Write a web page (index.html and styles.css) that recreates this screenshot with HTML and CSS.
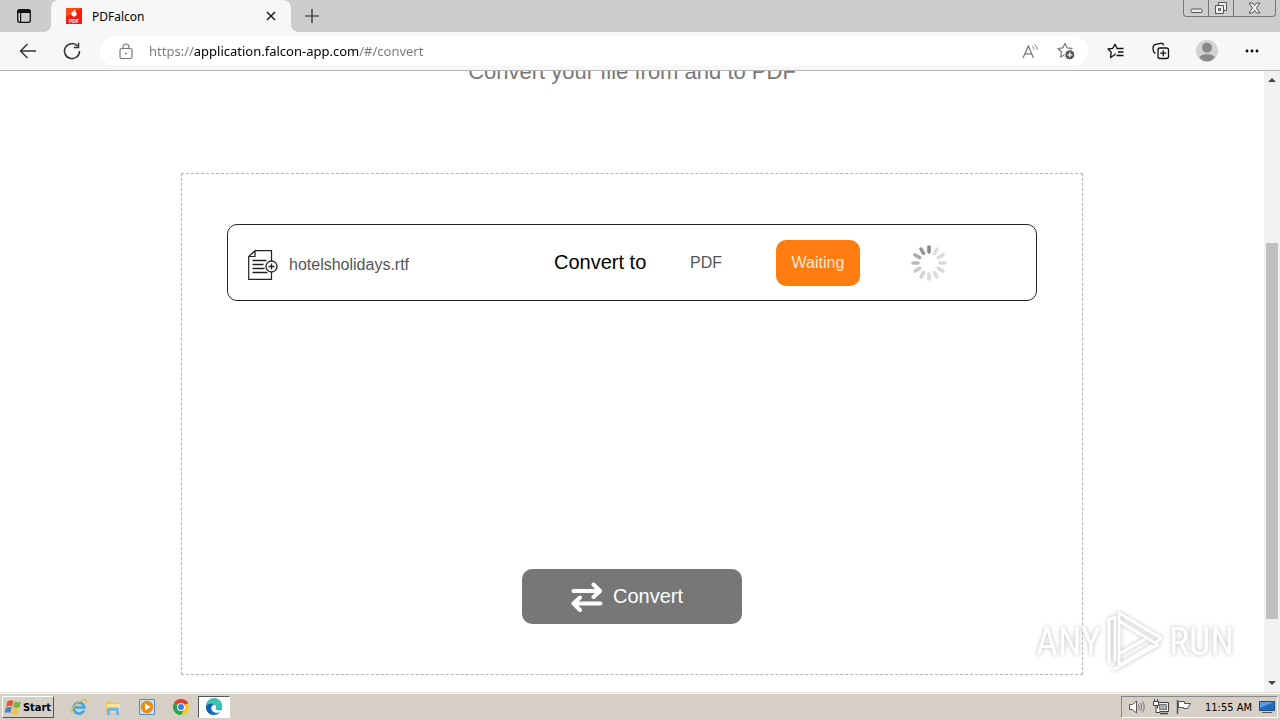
FILE: index.html
```html
<!DOCTYPE html>
<html lang="en">

<head>
    <meta charset="UTF-8">
    <title>PDFalcon</title>
    <link rel="stylesheet" href="styles.css">
</head>

<body>
    <header class="tabs">
        <button class="tab-menu" aria-label="Tab actions">
            <svg width="16" height="16" viewBox="0 0 16 16"><rect x="1.7" y="1.7" width="12.6" height="12.6" rx="2" fill="none" stroke="#111" stroke-width="1.3"/><path d="M1.5 5V3.5a2 2 0 0 1 2-2h9a2 2 0 0 1 2 2V5z" fill="#111"/><path d="M4.6 5v9" stroke="#111" stroke-width="1.2"/></svg>
        </button>
        <div class="tab">
            <svg width="16" height="16" viewBox="0 0 16 16"><rect width="16" height="16" fill="#f51d0d"/><path d="M0 0h16L0 9z" fill="#ff4a16"/><path d="M8 1c.3 2 2.8 3 2.8 5.500a2.900 2.900 0 0 1-5.600 0C5.200 5 6 4.500 6.200 3.500c.5.400.7.800.8 1.200C7.600 3.600 8 2.500 8 1z" fill="#fff"/><text x="8" y="14.600" text-anchor="middle" class="favicon-text">PDF</text></svg>
            <span class="tab-title">PDFalcon</span>
            <button class="tab-close" aria-label="Close tab">
                <svg width="10" height="10" viewBox="0 0 10 10"><path d="M1 1l8 8M9 1L1 9" stroke="#111" stroke-width="1.4"/></svg>
            </button>
        </div>
        <button class="tab-new" aria-label="New tab">
            <svg width="14" height="14" viewBox="0 0 14 14"><path d="M7 0v14M0 7h14" stroke="#222" stroke-width="1.2"/></svg>
        </button>
        <div class="win">
            <button aria-label="Minimize"><svg width="13" height="14" viewBox="0 0 13 14"><rect x="1" y="8" width="11" height="3.500" rx="1" fill="#eee" stroke="#555"/></svg></button>
            <button aria-label="Restore"><svg width="14" height="14" viewBox="0 0 14 14"><path d="M4.500 1.500h8v8h-8z" fill="#eee" stroke="#555"/><path d="M1.500 4.500h8v8h-8z" fill="#eee" stroke="#555"/><path d="M4.500 7.500h2v2h-2z" fill="#ccc" stroke="#555"/></svg></button>
            <button class="win-close" aria-label="Close"><svg width="13" height="12" viewBox="0 0 13 12"><path d="M1 1h3.500l2 2.500 2-2.500H12L8.500 6l3.500 5H8.500l-2-2.700-2 2.700H1l3.500-5z" fill="#eee" stroke="#555"/></svg></button>
        </div>
    </header>

    <nav class="toolbar">
        <button class="tool" aria-label="Back">
            <svg width="18" height="16" viewBox="0 0 18 16"><path d="M17 8H2M8.500 1L1.500 8l7 7" fill="none" stroke="#333" stroke-width="1.400"/></svg>
        </button>
        <button class="tool" aria-label="Refresh">
            <svg width="18" height="18" viewBox="0 0 18 18"><path d="M16.500 9A7.500 7.500 0 1 1 14.500 4" fill="none" stroke="#333" stroke-width="1.500"/><path d="M15.500.8v4.700H10.800" fill="none" stroke="#333" stroke-width="1.500"/></svg>
        </button>
        <div class="address">
            <svg width="14" height="17" viewBox="0 0 14 17"><rect x="1" y="5.500" width="12" height="10" rx="1.800" fill="none" stroke="#777" stroke-width="1.200"/><path d="M4 5.500V4a3 3 0 0 1 6 0v1.500" fill="none" stroke="#777" stroke-width="1.200"/><circle cx="7" cy="10.500" r="1" fill="#777"/></svg>
            <input class="url" type="text" aria-label="Address" value="https://application.falcon-app.com/#/convert">
            <button aria-label="Read aloud">
                <svg width="17" height="17" viewBox="0 0 17 17"><path d="M1 15L6.300 3 11.500 15M3 10.800h6.600" fill="none" stroke="#777" stroke-width="1.200"/><path d="M10.300 3.200c1 .9 1.400 2 1.500 3.300M12.500 1.500c1.800 1.500 2.700 3.300 2.700 5.500" fill="none" stroke="#777"/></svg>
            </button>
            <button aria-label="Add to favorites">
                <svg width="18" height="18" viewBox="0 0 18 18"><path d="M8 1.300l2 4.500 5 .6-3.700 3.500L12.300 14 8 12.500 3.700 15l.8-5L1 6.500l5-.7z" fill="none" stroke="#777" stroke-width="1.200" stroke-linejoin="round"/><circle cx="12.800" cy="12.800" r="5" fill="#555" stroke="#fff"/><path d="M12.800 10.300v5M10.300 12.800h5" stroke="#fff" stroke-width="1.200"/></svg>
            </button>
        </div>
        <div class="actions">
            <button aria-label="Favorites">
                <svg width="18" height="16" viewBox="0 0 18 16"><path d="M8.500 10.500L7.500 12 3.500 14.500l.7-5.200L1 6l4.700-.6L8 1.300l2 4.200h6.500M11 9h5.500M9.500 12.500h7" fill="none" stroke="#111" stroke-width="1.300" stroke-linejoin="round"/></svg>
            </button>
            <button aria-label="Collections">
                <svg width="18" height="18" viewBox="0 0 18 18"><rect x="6" y="6" width="10.500" height="10.500" rx="2" fill="none" stroke="#111" stroke-width="1.300"/><path d="M11.200 8.200v6M8.200 11.200h6M3.500 11.500C2 10.800 1 8 1 6c0-2 1-3.300 2.700-3.700l5-1c1.600-.2 2.600.3 3 2" fill="none" stroke="#111" stroke-width="1.300"/></svg>
            </button>
            <button aria-label="Profile">
                <svg width="22" height="22" viewBox="0 0 22 22"><circle cx="11" cy="11" r="11" fill="#d5d3d1"/><circle cx="11" cy="7.800" r="5" fill="#8a8886"/><path d="M3.500 17.500c0-2 3-3.300 7.500-3.300s7.500 1.300 7.500 3.300c-1.500 2.300-4.500 3.800-7.500 3.800s-6-1.500-7.500-3.800z" fill="#8a8886"/></svg>
            </button>
            <button aria-label="Settings and more">
                <svg width="14" height="4" viewBox="0 0 14 4"><circle cx="2" cy="2" r="1.400"/><circle cx="7" cy="2" r="1.400"/><circle cx="12" cy="2" r="1.400"/></svg>
            </button>
        </div>
    </nav>

    <div class="view">
        <main class="page">
            <h1>Convert your file from and to PDF</h1>
            <section class="dropzone">
                <div class="file">
                    <div class="file-name">
                        <svg width="30" height="30" viewBox="0 0 30 30"><path d="M7 .7h16.500v28.600H.7V6.500zM7 .7v5.800H.7" fill="none" stroke="#222" stroke-width="1.200"/><path d="M4.500 10.500h14M4.500 14.500h11M4.500 18.500h12M4.500 22.500h15" stroke="#222" stroke-width="1.300"/><circle cx="23.500" cy="16.500" r="5.500" fill="#fff" stroke="#222" stroke-width="1.300"/><path d="M23.500 13.500v6M20.500 16.500h6" stroke="#222" stroke-width="1.300"/></svg>
                        <span>hotelsholidays.rtf</span>
                    </div>
                    <strong class="file-to">Convert to</strong>
                    <span class="file-type">PDF</span>
                    <button class="waiting">Waiting</button>
                    <svg class="spinner" width="38" height="38" viewBox="-19 -19 38 38">
                        <g stroke-width="3.600" stroke-linecap="round">
                            <path d="M0-16v5" stroke="#888"/>
                            <path d="M0-16v5" stroke="#dedede" transform="rotate(30)"/>
                            <path d="M0-16v5" stroke="#dedede" transform="rotate(60)"/>
                            <path d="M0-16v5" stroke="#dadada" transform="rotate(90)"/>
                            <path d="M0-16v5" stroke="#dadada" transform="rotate(120)"/>
                            <path d="M0-16v5" stroke="#dadada" transform="rotate(150)"/>
                            <path d="M0-16v5" stroke="#d8d8d8" transform="rotate(180)"/>
                            <path d="M0-16v5" stroke="#d2d2d2" transform="rotate(210)"/>
                            <path d="M0-16v5" stroke="#c8c8c8" transform="rotate(240)"/>
                            <path d="M0-16v5" stroke="#b8b8b8" transform="rotate(270)"/>
                            <path d="M0-16v5" stroke="#a8a8a8" transform="rotate(300)"/>
                            <path d="M0-16v5" stroke="#989898" transform="rotate(330)"/>
                        </g>
                    </svg>
                </div>
                <button class="convert">
                    <svg width="32" height="30" viewBox="0 0 32 30"><path d="M2.500 9h26M22.500 2.500L29 9l-6.500 6M29.500 21.500h-26M9 15.500l-6.500 6L9 28" fill="none" stroke="#fff" stroke-width="4" stroke-linecap="round" stroke-linejoin="round"/></svg>
                    <span>Convert</span>
                </button>
            </section>
        </main>
        <div class="scrollbar">
            <svg width="8" height="4" viewBox="0 0 8 4"><path d="M4 0l4 4H0z" fill="#444"/></svg>
            <div class="track"><div class="thumb"></div></div>
            <svg width="8" height="4" viewBox="0 0 8 4"><path d="M0 0h8L4 4z" fill="#444"/></svg>
        </div>
        <div class="watermark">
            <span>ANY</span>
            <svg width="60" height="64" viewBox="0 0 60 64"><path d="M4 54V10l6-3v44M14 3l42 25-6 5-36-22zM14 12v32l26-15M8 60l46-26M14 45v10l34-20" fill="none" stroke="#fff" stroke-width="3" stroke-linejoin="round"/></svg>
            <span>RUN</span>
        </div>
    </div>

    <footer class="taskbar">
        <button class="start">
            <svg width="17" height="16" viewBox="0 0 17 16"><path d="M2.500 2.500C4.500 1 6.500 1 8.500 2L7 7.500C5 6.500 3 6.700 1 8z" fill="#e5532d"/><path d="M9.500 2.500c2 1 4 1 6.500-.3L14.500 8c-2 1.200-4 1.200-6.300.2z" fill="#72b643"/><path d="M.8 9C3 7.700 5 7.700 6.800 8.600L5.300 14c-2-1-4-.9-6 .3z" fill="#3f85cf"/><path d="M7.800 9.300c2 1 4 1 6.400-.2l-1.500 5.500c-2 1.200-4.200 1.200-6.400.1z" fill="#f6c42c"/></svg>
            <span>Start</span>
        </button>
        <div class="launch">
            <button aria-label="Internet Explorer">
                <svg width="18" height="18" viewBox="0 0 18 18"><path d="M14 12.500A5.500 5.500 0 1 1 14.500 9.500H5" fill="none" stroke="#3fa7e0" stroke-width="2.600"/><path d="M2.500 16C-1 14 6 4 13 2c4-1 4 1 3 3" fill="none" stroke="#edb92e" stroke-width="1.300"/></svg>
            </button>
            <button aria-label="Explorer">
                <svg width="18" height="18" viewBox="0 0 18 18"><path d="M2 3h5l1 1.500h7V14H2z" fill="#e9c85c"/><path d="M3 6h13v8H3z" fill="#f8e69d"/><path d="M3 17v-6q0-1.500 1.500-1.500h9Q15 9.500 15 11v6h-3v-4H6v4z" fill="#75b5df"/></svg>
            </button>
            <button aria-label="Media Player">
                <svg width="18" height="18" viewBox="0 0 18 18"><path d="M1.500 1.500h15v15h-15z" fill="#c8dff3" stroke="#548ec5"/><circle cx="9" cy="9" r="6.200" fill="#f28b16"/><path d="M7 5.500l5.500 3.500L7 12.500z" fill="#fff"/></svg>
            </button>
            <button aria-label="Chrome">
                <svg width="18" height="18" viewBox="0 0 18 18"><circle cx="9" cy="9" r="8" fill="#f7c72c"/><path d="M9 9L2.100 5A8 8 0 0 1 15.900 5z" fill="#df3b2e"/><path d="M2.100 5A8 8 0 0 0 9 17l3.300-6L9 9z" fill="#2ba24c"/><path d="M9 5h6.900" stroke="#df3b2e" stroke-width="1"/><circle cx="9" cy="9" r="4" fill="#fff"/><circle cx="9" cy="9" r="3" fill="#397fe8"/></svg>
            </button>
            <button class="active" aria-label="Edge">
                <svg width="18" height="18" viewBox="0 0 18 18"><circle cx="9" cy="9" r="8" fill="#1579c8"/><path d="M1 8a8 8 0 0 1 16 0c.3 3-2.500 4.500-5.500 3.300-1-.5-.3-1 0-1.800C12 6.500 5 3.500 1 8z" fill="#39c3b0"/><path d="M9.500 6.500C6 7 5.300 11 8 13.500c2.500 2 6 1.500 8 .2 1-.7.200 1-1.500 2l3.500 1V11c-2 1.500-5.500 1.800-7 .3-.8-.8.300-1.300.2-2.500 0-1-.7-1.800-1.700-2.300z" fill="#fff"/><path d="M1 9c2-3.500 6-4 8.500-2.500C5 6.500 4 12 8 16.800 4 16.500 1 13 1 9z" fill="#145fa8"/></svg>
            </button>
        </div>
        <div class="tray">
            <svg width="18" height="16" viewBox="0 0 18 16"><path d="M1.500 5.500h3L8.500 2v12L4.500 10.500h-3z" fill="#fff" stroke="#555"/><path d="M10.500 5.500q1.500 2.500 0 5M12.500 4q2.500 4 0 8M14.500 2.500q3.500 5.500 0 11" fill="none" stroke="#777"/></svg>
            <svg width="16" height="16" viewBox="0 0 16 16"><path d="M4.500 3.500h11v9h-11z" fill="#eee" stroke="#444"/><path d="M6.500 5.500h7v5h-7z" fill="#aaa" stroke="#777"/><path d="M7 14.500h8" stroke="#444" stroke-width="1.500"/><path d="M.5 2.500v4h5v-4zM1.500 0v3M4.500 0v3M3 7v6.500h4" fill="#fff" stroke="#444"/></svg>
            <svg width="16" height="16" viewBox="0 0 16 16"><path d="M1.500 1v14" stroke="#555" stroke-width="1.500"/><path d="M2.500 2.500h6v2h6l-3 5h-4v-1h-5z" fill="#fff" stroke="#555"/></svg>
            <time class="clock">11:55 AM</time>
            <svg width="16" height="14" viewBox="0 0 16 14"><path d="M.5 1.500h15v9H.5z" fill="#2468b8" stroke="#174c8e"/><path d="M1 2h14L1 8z" fill="#5a9de0"/><path d="M3 12.500h10" stroke="#555"/></svg>
        </div>
    </footer>
</body>

</html>
```
FILE: styles.css
```css
* {
    box-sizing: border-box;
    margin: 0;
    padding: 0;
}

body {
    display: flex;
    flex-direction: column;
    height: 100vh;
    overflow: hidden;
    font-family: "Liberation Sans", Arial, sans-serif;
    background: #fff;
}

button {
    display: flex;
    align-items: center;
    justify-content: center;
    border: 0;
    background: none;
    font-family: inherit;
}

svg {
    display: block;
    flex: none;
}

/* tab strip */
.tabs {
    display: flex;
    flex: none;
    height: 32px;
    background: #cdcdcd;
}

.tab-menu {
    width: 51px;
    padding-right: 4px;
    background: radial-gradient(circle at 43px 24px, transparent 8px, #f7f7f7 8px) 43px 24px / 8px 8px no-repeat;
    background: radial-gradient(circle at 0 0, #cdcdcd 8px, #f7f7f7 8px) right bottom / 8px 8px no-repeat;
}

.tab {
    display: flex;
    align-items: center;
    width: 240px;
    padding: 0 15px;
    gap: 10px;
    background: #f7f7f7;
    border-radius: 8px 8px 0 0;
}

.tab-title {
    flex: 1;
    font-family: "Noto Sans", sans-serif;
    font-size: 12px;
}

.favicon-text {
    font: bold 5px "Liberation Sans", sans-serif;
    fill: #fff;
}

.tab-new {
    width: 42px;
    background: radial-gradient(circle at 100% 0, #cdcdcd 8px, #f7f7f7 8px) left bottom / 8px 8px no-repeat;
}

.win {
    display: flex;
    height: 17px;
    margin-left: auto;
    margin-right: 4px;
    border: 1px solid #777;
    border-top: 0;
    border-radius: 0 0 4px 4px;
}

.win button {
    width: 25px;
    border-right: 1px solid #777;
}

.win .win-close {
    width: 41px;
    border-right: 0;
}

/* toolbar */
.toolbar {
    display: flex;
    flex: none;
    align-items: center;
    height: 39px;
    padding: 0 21px 0 6px;
    background: #f7f7f7;
    border-bottom: 1px solid #b5b5b5;
}

.tool {
    width: 44px;
    height: 30px;
}

.address {
    display: flex;
    flex: 1;
    align-items: center;
    height: 30px;
    margin-left: 6px;
    padding: 0 13px 0 19px;
    gap: 18px;
    background: #fff;
    border-radius: 15px;
}

.url {
    flex: 1;
    min-width: 0;
    margin-left: -2px;
    border: 0;
    outline: 0;
    font-family: "Noto Sans", sans-serif;
    font-size: 13px;
    color: transparent;
    background: linear-gradient(90deg, #777 45px, #000 45px, #000 210px, #777 210px);
    -webkit-background-clip: text;
    background-clip: text;
}

.actions {
    display: flex;
    align-items: center;
    justify-content: space-between;
    width: 152px;
    margin-left: 19px;
}

/* page */
.view {
    display: flex;
    flex: 1;
    min-height: 0;
    position: relative;
}

.page {
    display: flex;
    flex: 1;
    flex-direction: column;
    align-items: center;
    justify-content: flex-end;
    padding: 0 24px 17px;
    overflow: hidden;
}

h1 {
    flex: none;
    margin-bottom: 88px;
    font-size: 22px;
    font-weight: normal;
    line-height: 26px;
    color: #777;
}

.dropzone {
    display: flex;
    flex: none;
    flex-direction: column;
    align-items: center;
    justify-content: space-between;
    width: 100%;
    max-width: 902px;
    min-height: 502px;
    padding: 50px 45px;
    border: 1px dashed #b5b5b5;
}

.file {
    display: grid;
    grid-template-columns: 1fr 136px 86px 134px 126px;
    align-items: center;
    width: 100%;
    height: 77px;
    padding-left: 20px;
    border: 1px solid #222;
    border-radius: 10px;
}

.file-name {
    display: flex;
    align-items: center;
    padding-top: 5px;
    gap: 11px;
    font-size: 16px;
    color: #555;
}

.file-to {
    font-size: 20px;
    font-weight: normal;
}

.file-type {
    font-size: 16px;
    color: #555;
}

.waiting {
    width: 84px;
    height: 46px;
    border-radius: 10px;
    background: #ff7c10;
    color: #ffe8d2;
    font-size: 16px;
}

.convert {
    width: 220px;
    height: 55px;
    padding-right: 10px;
    gap: 10px;
    border-radius: 10px;
    background: #777;
    color: #fff;
    font-size: 20px;
}

.scrollbar {
    display: flex;
    flex: none;
    flex-direction: column;
    align-items: center;
    width: 16px;
    padding: 7px 0;
    background: #f1f1f1;
}

.track {
    display: flex;
    flex: 1;
    flex-direction: column;
    justify-content: flex-end;
    width: 12px;
    padding-bottom: 62px;
}

.thumb {
    height: 70%;
    background: #c1c1c1;
}

.watermark {
    position: absolute;
    right: 46px;
    bottom: 18px;
    display: flex;
    align-items: center;
    gap: 4px;
    font-family: "Roboto Condensed", "Liberation Sans", sans-serif;
    font-size: 38px;
    color: #fff;
    filter: drop-shadow(0 0 2px #bbb);
}

/* taskbar */
.taskbar {
    display: flex;
    flex: none;
    align-items: center;
    height: 28px;
    padding: 1px 2px 0;
    background: #d5cfc6;
    border-top: 1px solid #e2ded8;
    box-shadow: inset 0 1px #fff;
}

.start {
    width: 52px;
    height: 22px;
    gap: 1px;
    border: 1px solid;
    border-color: #fff #555 #555 #fff;
    font-family: "DejaVu Sans Condensed", "DejaVu Sans", sans-serif;
    font-size: 11px;
    font-weight: bold;
}

.launch {
    display: flex;
    margin-left: 8px;
}

.launch button {
    width: 34px;
    height: 22px;
}

.launch .active {
    width: 32px;
    background: #fff;
    border: 1px solid;
    border-color: #555 #fff #fff #555;
}

.tray {
    display: flex;
    align-items: center;
    height: 22px;
    margin-left: auto;
    padding: 0 2px 0 6px;
    gap: 7px;
    border: 1px solid;
    border-color: #888 #fff #fff #888;
}

.clock {
    margin-left: 6px;
    font-family: "DejaVu Sans Condensed", "DejaVu Sans", sans-serif;
    font-size: 11px;
}
```
